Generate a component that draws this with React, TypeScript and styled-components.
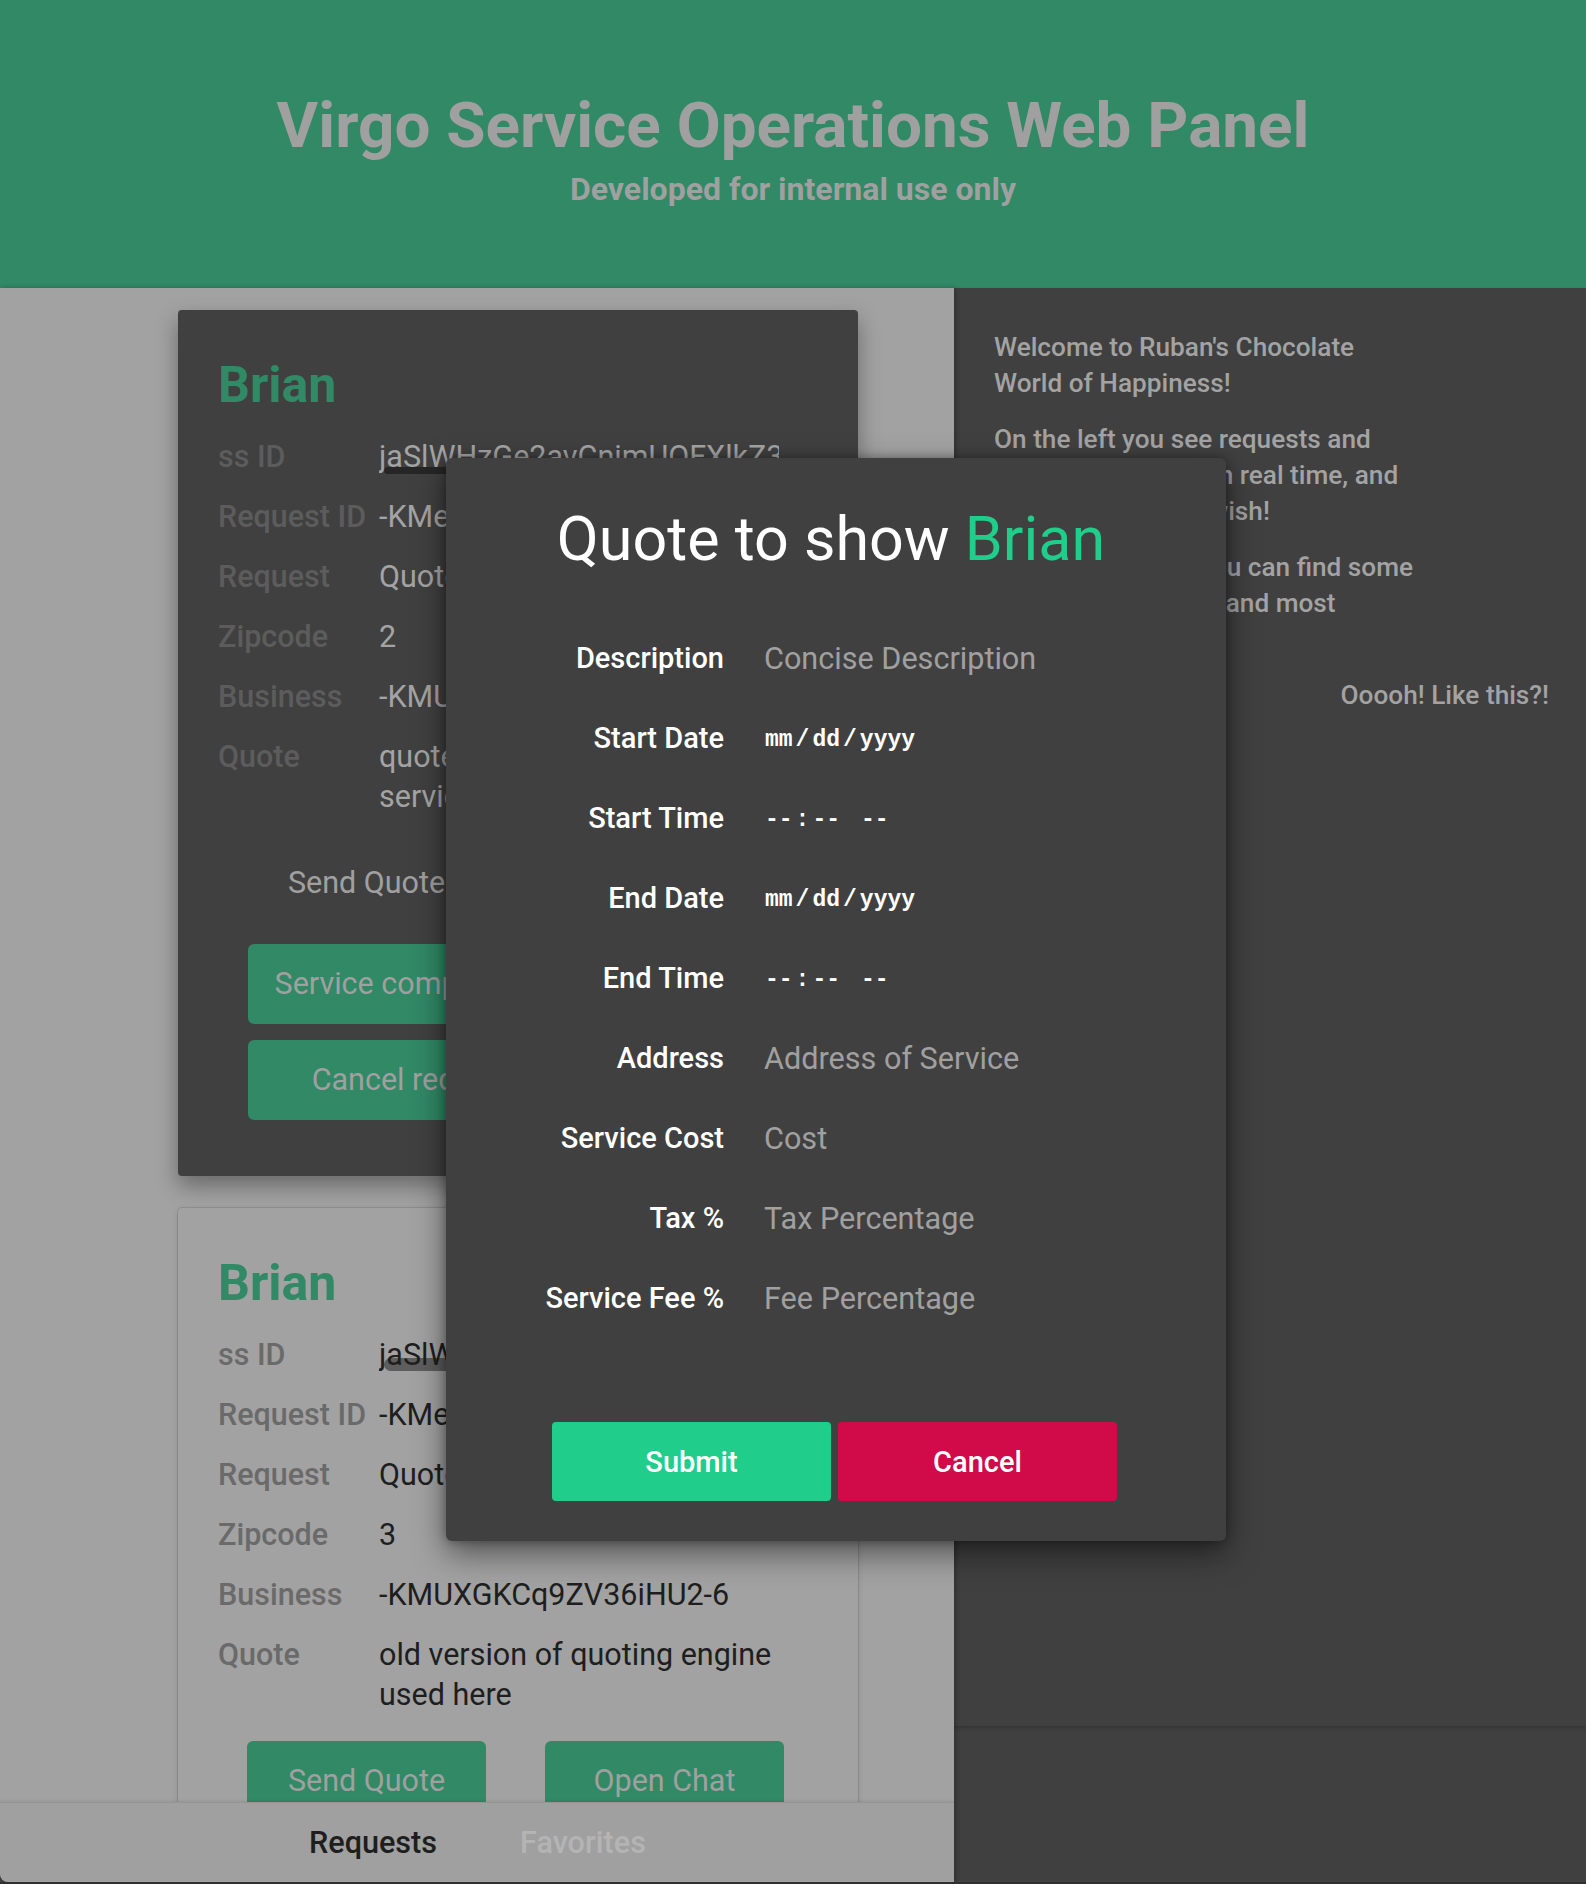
import React from 'react';
import styled, { createGlobalStyle } from 'styled-components';

const GlobalStyle = createGlobalStyle`
  html, body { margin: 0; padding: 0; background: #404040; }
  body { font-family: Roboto, "Noto Sans", "Liberation Sans", sans-serif; }
  * { box-sizing: border-box; }
`;

const Page = styled.div`
  position: relative;
  width: 1586px;
  height: 1884px;
  overflow: hidden;
  background: #404040;
  border-bottom: 2px solid #2f2f2f;
`;

const Header = styled.header`
  height: 288px;
  background: #318966;
  padding-top: 94px;
  text-align: center;
  color: #a0a0a0;
`;

const Title = styled.h1`
  margin: 0;
  font-size: 63.8px;
  line-height: 64px;
  font-weight: 700;
`;

const Subtitle = styled.h2`
  margin: 15px 0 0;
  font-size: 32px;
  line-height: 32px;
  font-weight: 700;
`;

const Body = styled.div`
  display: flex;
  align-items: flex-start;
  height: 1594px;
`;

const LeftColumn = styled.section`
  position: relative;
  z-index: 1;
  width: 954px;
  height: 1594px;
  overflow: hidden;
  background: #a2a2a2;
  border-bottom-left-radius: 8px;
  box-shadow: 2px 0 5px rgba(0, 0, 0, 0.25);
`;

const CardList = styled.div`
  display: flex;
  flex-direction: column;
  gap: 32px;
  padding: 22px 0 0 178px;
`;

const Card = styled.article<{ $active?: boolean }>`
  width: 680px;
  padding: 45px 38px 56px 40px;
  border-radius: 4px;
  background: ${(p) => (p.$active ? '#404040' : '#a2a2a2')};
  box-shadow: ${(p) =>
    p.$active
      ? '0 10px 22px rgba(0, 0, 0, 0.35)'
      : '0 0 0 1px rgba(0, 0, 0, 0.1), 0 2px 6px rgba(0, 0, 0, 0.12)'};
`;

const CardName = styled.h2`
  margin: 0;
  font-size: 50px;
  line-height: 60px;
  font-weight: 700;
  color: #318966;
`;

const InfoTable = styled.div`
  margin-top: 12px;
`;

const InfoRow = styled.div`
  display: grid;
  grid-template-columns: 161px 1fr;
  padding: 10px 0;
  font-size: 30.5px;
  line-height: 40px;
`;

const InfoLabel = styled.div<{ $active?: boolean }>`
  font-weight: 500;
  color: ${(p) => (p.$active ? '#5c5c5c' : '#6a6a6a')};
`;

const InfoValue = styled.div<{ $active?: boolean; $scroll?: boolean }>`
  position: relative;
  font-weight: 400;
  color: ${(p) => (p.$active ? '#a4a4a4' : '#1e1e1e')};
  white-space: ${(p) => (p.$scroll ? 'nowrap' : 'normal')};
  overflow: ${(p) => (p.$scroll ? 'hidden' : 'visible')};
  width: ${(p) => (p.$scroll ? '400px' : 'auto')};
`;

const ScrollText = styled.span`
  position: relative;
  z-index: 1;
`;

const ScrollThumb = styled.div<{ $active?: boolean }>`
  position: absolute;
  left: 5px;
  bottom: ${(p) => (p.$active ? 3 : 4)}px;
  width: 280px;
  height: ${(p) => (p.$active ? 7 : 13)}px;
  border-radius: 7px;
  background: ${(p) => (p.$active ? 'rgba(0, 0, 0, 0.4)' : 'rgba(0, 0, 0, 0.42)')};
`;

const ButtonRow = styled.div`
  display: flex;
  gap: 59px;
  margin-top: 16px;
  padding-left: 29px;
`;

const CardButton = styled.button<{ $ghost?: boolean; $width?: number; $gapTop?: number }>`
  display: block;
  width: ${(p) => p.$width ?? 239}px;
  height: 80px;
  margin: ${(p) => (p.$gapTop !== undefined ? `${p.$gapTop}px 0 0 30px` : '0')};
  padding: 22px 0;
  border: none;
  border-radius: 6px;
  background: ${(p) => (p.$ghost ? 'transparent' : '#318966')};
  color: #a0a0a0;
  font-family: inherit;
  font-size: 30.5px;
  line-height: 36px;
  font-weight: 400;
  text-align: center;
  white-space: nowrap;
`;

const BottomNav = styled.nav`
  position: absolute;
  left: 0;
  bottom: 0;
  display: flex;
  align-items: center;
  gap: 83px;
  width: 100%;
  height: 80px;
  padding-left: 309px;
  background: #a0a0a0;
  border-top: 1px solid rgba(0, 0, 0, 0.07);
  border-bottom-left-radius: 8px;
  box-shadow: 0 -1px 3px rgba(0, 0, 0, 0.08);
`;

const NavTab = styled.span<{ $active?: boolean }>`
  font-size: 30.6px;
  line-height: 80px;
  font-weight: 500;
  color: ${(p) => (p.$active ? '#1e1e1e' : '#b4b4b4')};
`;

const SidePanel = styled.aside`
  flex: 1;
  height: 1438px;
  padding: 41px 37px 0 40px;
  background: #404040;
  box-shadow: 0 2px 4px rgba(0, 0, 0, 0.2);
`;

const SideText = styled.p<{ $right?: boolean }>`
  margin: 0 0 20px;
  font-size: 26.2px;
  line-height: 36px;
  font-weight: 500;
  color: #a3a3a3;
  white-space: nowrap;
  text-align: ${(p) => (p.$right ? 'right' : 'left')};
`;

const Modal = styled.div`
  position: absolute;
  z-index: 10;
  left: 446px;
  top: 458px;
  width: 780px;
  padding: 45px 0 40px;
  background: #404040;
  border-radius: 6px;
  box-shadow: 0 12px 32px rgba(0, 0, 0, 0.5), 0 0 10px rgba(0, 0, 0, 0.3);
`;

const ModalTitle = styled.h1`
  margin: 0 0 43px;
  padding-right: 10px;
  font-size: 61px;
  line-height: 72px;
  font-weight: 400;
  color: #ffffff;
  text-align: center;
`;

const Highlight = styled.span`
  color: #21cd8a;
`;

const Form = styled.form`
  display: grid;
  grid-template-columns: 278px 1fr;
  grid-auto-rows: 80px;
  column-gap: 40px;
  align-items: center;
`;

const FieldLabel = styled.label`
  font-size: 29px;
  line-height: 80px;
  font-weight: 500;
  color: #ffffff;
  text-align: right;
`;

const TextField = styled.input`
  width: 400px;
  height: 40px;
  padding: 0;
  border: none;
  outline: none;
  background: transparent;
  color: #ffffff;
  font-family: Roboto, "Noto Sans", sans-serif;
  font-size: 30.6px;
  &::placeholder {
    color: #a0a0a0;
    opacity: 1;
  }
`;

const DateField = styled.input`
  width: 300px;
  height: 40px;
  padding: 3px 0 0;
  border: none;
  outline: none;
  background: transparent;
  color: #ffffff;
  color-scheme: dark;
  font-family: "Liberation Mono", "DejaVu Sans Mono", monospace;
  font-size: 23px;
  font-weight: 700;
  &::-webkit-calendar-picker-indicator {
    display: none;
  }
  &::-webkit-datetime-edit {
    padding: 0;
  }
  &::-webkit-datetime-edit-text {
    padding: 0 2px;
  }
  &::-webkit-datetime-edit-ampm-field {
    margin-left: 8px;
  }
`;

const ModalActions = styled.div`
  display: flex;
  justify-content: center;
  gap: 7px;
  margin-top: 84px;
  padding-right: 3px;
`;

const ModalButton = styled.button<{ $danger?: boolean }>`
  width: 279px;
  height: 79px;
  border: none;
  border-radius: 4px;
  background: ${(p) => (p.$danger ? '#d10a4a' : '#21cd8a')};
  color: #ffffff;
  font-family: inherit;
  font-size: 29px;
  font-weight: 500;
`;

type Req = {
  ssId: string;
  requestId: string;
  request: string;
  zipcode: string;
  business: string;
  quote: string;
};

const requests: Req[] = [
  {
    ssId: 'jaSlWHzGe2avCnimUOFXlkZ3b9Tq2',
    requestId: '-KMeR8pW3qkV2nHd7sLx',
    request: 'Quote',
    zipcode: '2',
    business: '-KMUXGKCq9ZV36iHU2-6',
    quote: 'quoted price for the requested service',
  },
  {
    ssId: 'jaSlWHzGe2avCnimUOFXlkZ3b9Tq2',
    requestId: '-KMeT4aQ1zLm8xYc2vBn',
    request: 'Quote',
    zipcode: '3',
    business: '-KMUXGKCq9ZV36iHU2-6',
    quote: 'old version of quoting engine used here',
  },
];

function RequestCard({ data, active }: { data: Req; active?: boolean }) {
  const rows: [string, string][] = [
    ['Request ID', data.requestId],
    ['Request', data.request],
    ['Zipcode', data.zipcode],
    ['Business', data.business],
    ['Quote', data.quote],
  ];
  return (
    <Card $active={active}>
      <CardName>Brian</CardName>
      <InfoTable>
        <InfoRow>
          <InfoLabel $active={active}>ss ID</InfoLabel>
          <InfoValue $active={active} $scroll>
            <ScrollThumb $active={active} />
            <ScrollText>{data.ssId}</ScrollText>
          </InfoValue>
        </InfoRow>
        {rows.map(([label, value]) => (
          <InfoRow key={label}>
            <InfoLabel $active={active}>{label}</InfoLabel>
            <InfoValue $active={active}>{value}</InfoValue>
          </InfoRow>
        ))}
      </InfoTable>
      <ButtonRow>
        <CardButton $ghost={active}>Send Quote</CardButton>
        <CardButton>Open Chat</CardButton>
      </ButtonRow>
      <CardButton $width={304} $gapTop={21}>Service completed</CardButton>
      <CardButton $width={330} $gapTop={16}>Cancel request</CardButton>
    </Card>
  );
}

export default function App() {
  return (
    <Page>
      <GlobalStyle />
      <Header>
        <Title>Virgo Service Operations Web Panel</Title>
        <Subtitle>Developed for internal use only</Subtitle>
      </Header>
      <Body>
        <LeftColumn>
          <CardList>
            <RequestCard data={requests[0]} active />
            <RequestCard data={requests[1]} />
          </CardList>
          <BottomNav>
            <NavTab $active>Requests</NavTab>
            <NavTab>Favorites</NavTab>
          </BottomNav>
        </LeftColumn>
        <SidePanel>
          <SideText>
            Welcome to Ruban's Chocolate
            <br />
            World of Happiness!
          </SideText>
          <SideText>
            On the left you see requests and
            <br />
            favourites coming in real time, and
            <br />
            track them as you wish!
          </SideText>
          <SideText>
            In the bottom list you can find some
            <br />
            the profile settings, and most
            <br />
            importantly, exit.
          </SideText>
          <SideText $right>Ooooh! Like this?!</SideText>
        </SidePanel>
      </Body>
      <Modal>
        <ModalTitle>
          Quote to show <Highlight>Brian</Highlight>
        </ModalTitle>
        <Form onSubmit={(e) => e.preventDefault()}>
          <FieldLabel>Description</FieldLabel>
          <TextField placeholder="Concise Description" />
          <FieldLabel>Start Date</FieldLabel>
          <DateField type="date" />
          <FieldLabel>Start Time</FieldLabel>
          <DateField type="time" />
          <FieldLabel>End Date</FieldLabel>
          <DateField type="date" />
          <FieldLabel>End Time</FieldLabel>
          <DateField type="time" />
          <FieldLabel>Address</FieldLabel>
          <TextField placeholder="Address of Service" />
          <FieldLabel>Service Cost</FieldLabel>
          <TextField placeholder="Cost" />
          <FieldLabel>Tax %</FieldLabel>
          <TextField placeholder="Tax Percentage" />
          <FieldLabel>Service Fee %</FieldLabel>
          <TextField placeholder="Fee Percentage" />
        </Form>
        <ModalActions>
          <ModalButton>Submit</ModalButton>
          <ModalButton $danger>Cancel</ModalButton>
        </ModalActions>
      </Modal>
    </Page>
  );
}
